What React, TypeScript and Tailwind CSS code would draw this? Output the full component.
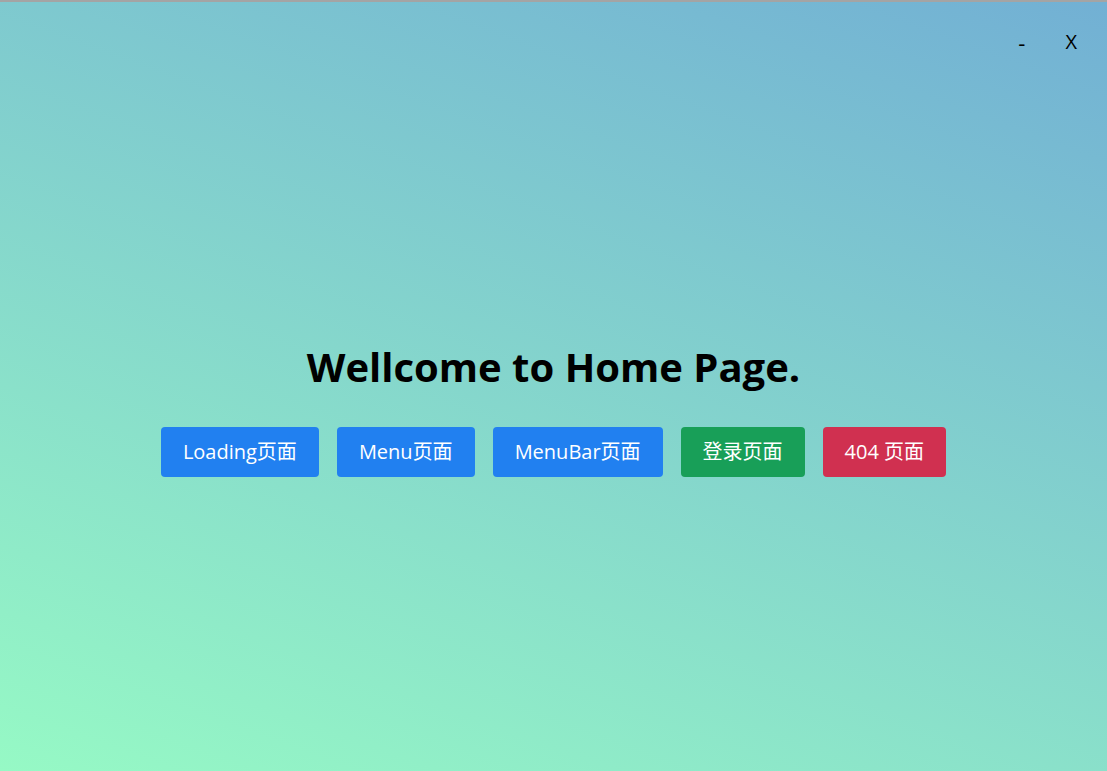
const buttons = [
  { label: "Loading页面", color: "bg-[#2180f0]" },
  { label: "Menu页面", color: "bg-[#2180f0]" },
  { label: "MenuBar页面", color: "bg-[#2180f0]" },
  { label: "登录页面", color: "bg-[#189f58]" },
  { label: "404 页面", color: "bg-[#d03050]" },
];

const font = { fontFamily: '"Open Sans", "Noto Sans CJK SC", sans-serif' };

export default function App() {
  return (
    <div
      className="w-[1107px] h-[771px] flex flex-col border-t-2 border-[#a4a4a4] bg-[linear-gradient(20deg,#96f9c5,#72b0d4)] overflow-hidden"
      style={font}
    >
      <div className="flex justify-end items-center h-[80px] pr-[26px] text-[20px] text-black">
        <button className="px-[8px] text-[22px]">-</button>
        <button className="ml-[28px] px-[4px]">X</button>
      </div>
      <div className="flex flex-col items-center pt-[265px]">
        <h1 className="text-[40px] font-bold leading-none text-black">Wellcome to Home Page.</h1>
        <div className="flex gap-[18px] mt-[40px]">
          {buttons.map((b) => (
            <button
              key={b.label}
              className={`${b.color} h-[50px] px-[22px] rounded-[4px] text-white text-[20px]`}
            >
              {b.label}
            </button>
          ))}
        </div>
      </div>
    </div>
  );
}
